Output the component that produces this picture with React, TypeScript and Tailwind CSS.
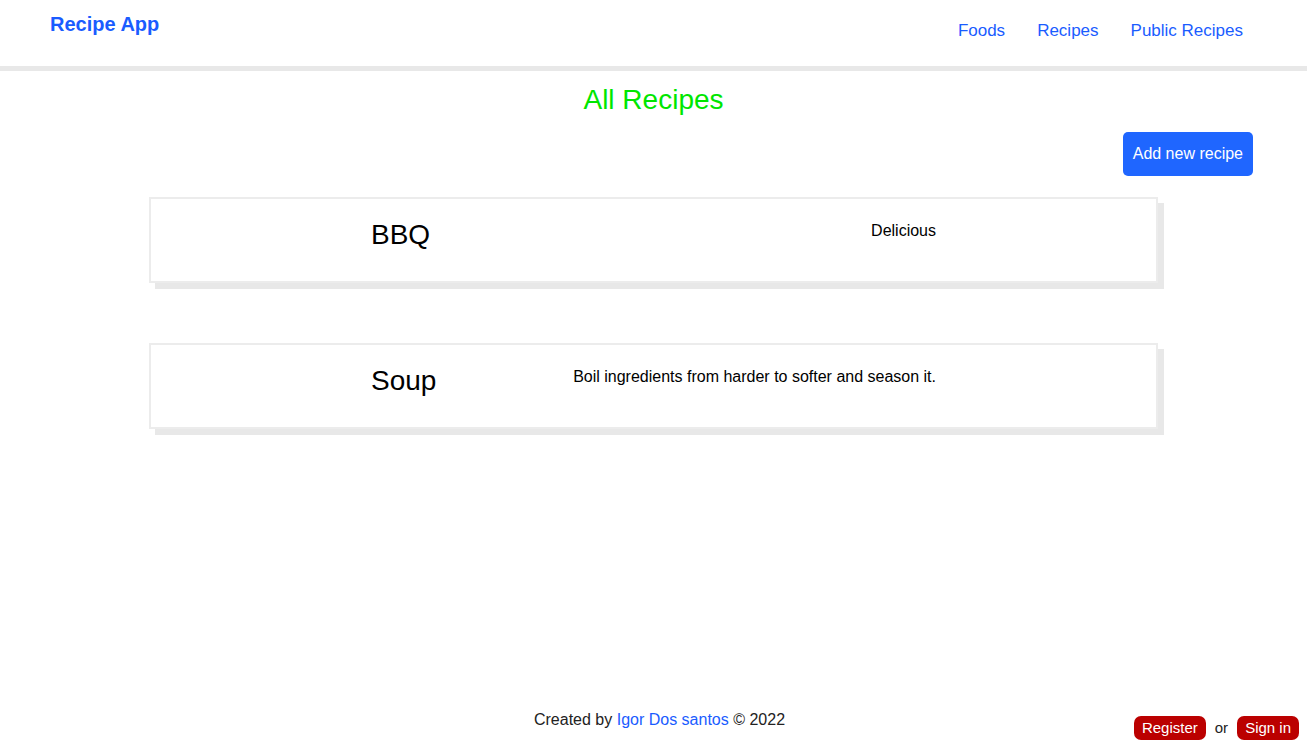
import React from "react";

const recipes = [
  { name: "BBQ", desc: "Delicious" },
  { name: "Soup", desc: "Boil ingredients from harder to softer and season it." },
];

export default function App() {
  return (
    <div
      className="relative min-h-screen flex flex-col bg-white text-black"
      style={{ fontFamily: '"Liberation Sans", Arial, sans-serif' }}
    >
      <header className="h-[71px] border-b-[5px] border-[#e8e8e8] flex items-start justify-between pl-[50px] pr-[64px]">
        <a className="mt-[12px] text-[20px] font-bold text-[#1a5cff] leading-[24px]">Recipe App</a>
        <nav className="mt-[20px] flex gap-[32px] text-[17px] leading-[22px] text-[#1a5cff]">
          <a>Foods</a>
          <a>Recipes</a>
          <a>Public Recipes</a>
        </nav>
      </header>

      <main className="flex-1 flex flex-col">
        <h1 className="mt-[13px] text-center text-[28px] leading-[32px] text-[#00e600]">All Recipes</h1>
        <div className="flex justify-end pr-[54px] mt-[16px]">
          <button className="h-[44px] px-[10px] rounded-[5px] bg-[#1f66ff] text-white text-[16px]">
            Add new recipe
          </button>
        </div>
        <div className="mt-[21px] flex flex-col gap-[60px] pl-[149px] pr-[149px]">
          {recipes.map((r) => (
            <div
              key={r.name}
              className="h-[86px] border-2 border-[#ececec] bg-white shadow-[6px_6px_0_0_#e8e8e8] flex justify-between items-start px-[220px]"
            >
              <h2 className="pt-[19px] text-[28px] leading-[34px]">{r.name}</h2>
              <p className="pt-[20px] text-[16px] leading-[24px]">{r.desc}</p>
            </div>
          ))}
        </div>
      </main>

      <footer className="h-[36px] flex items-start justify-center pl-[12px] text-[16px] leading-[24px] text-[#222]">
        <p>
          Created by <a className="text-[#1a5cff]">Igor Dos santos</a> © 2022
        </p>
      </footer>

      <div className="absolute right-[8px] bottom-[4px] flex items-center gap-[9px] text-[15px]">
        <button className="h-[24px] px-[8px] rounded-[7px] bg-[#bb0000] text-white leading-[24px]">Register</button>
        <span className="text-[#222]">or</span>
        <button className="h-[24px] px-[8px] rounded-[7px] bg-[#bb0000] text-white leading-[24px]">Sign in</button>
      </div>
    </div>
  );
}
